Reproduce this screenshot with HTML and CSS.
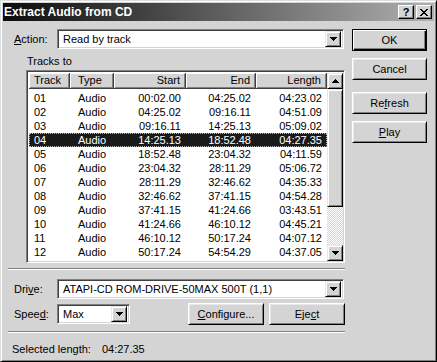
FILE: index.html
```html
<!DOCTYPE html>
<html lang="en">

<head>
    <meta charset="UTF-8">
    <title>Extract Audio from CD</title>
    <link rel="stylesheet" href="styles.css">
</head>

<body>
    <div class="window">
        <div class="titlebar">
            <span class="title">Extract Audio from CD</span>
            <div class="caption-buttons">
                <span class="cap-btn cap-help">?</span>
                <span class="cap-btn">
                    <svg width="8" height="7" viewBox="0 0 8 7"><path d="M0 0h2l2 2.2L6 0h2L5 3.5 8 7H6L4 4.8 2 7H0l3-3.5z" fill="#000" shape-rendering="crispEdges"/></svg>
                </span>
            </div>
        </div>

        <div class="content">
            <div class="main">
                <div class="field-row">
                    <span class="field-label"><u>A</u>ction:</span>
                    <div class="combo combo-wide">
                        <span class="combo-text">Read by track</span>
                        <span class="combo-arrow"><svg width="7" height="4" viewBox="0 0 7 4"><path d="M0 0h7v1h-1v1h-1v1h-1v1h-1v-1h-1v-1h-1v-1h-1z" fill="#000"/></svg></span>
                    </div>
                </div>

                <div class="list-label">Tracks to</div>

                <div class="listview">
                    <div class="list-body">
                        <div class="list-head">
                            <span class="col-track">Track</span>
                            <span class="col-type">Type</span>
                            <span class="col-num">Start</span>
                            <span class="col-num">End</span>
                            <span class="col-num">Length</span>
                        </div>
                        <div class="list-rows">
                            <div class="row"><span class="col-track">01</span><span class="col-type">Audio</span><span class="col-num">00:02.00</span><span class="col-num">04:25.02</span><span class="col-num">04:23.02</span></div>
                            <div class="row"><span class="col-track">02</span><span class="col-type">Audio</span><span class="col-num">04:25.02</span><span class="col-num">09:16.11</span><span class="col-num">04:51.09</span></div>
                            <div class="row"><span class="col-track">03</span><span class="col-type">Audio</span><span class="col-num">09:16.11</span><span class="col-num">14:25.13</span><span class="col-num">05:09.02</span></div>
                            <div class="row selected"><span class="col-track">04</span><span class="col-type">Audio</span><span class="col-num">14:25.13</span><span class="col-num">18:52.48</span><span class="col-num">04:27.35</span></div>
                            <div class="row"><span class="col-track">05</span><span class="col-type">Audio</span><span class="col-num">18:52.48</span><span class="col-num">23:04.32</span><span class="col-num">04:11.59</span></div>
                            <div class="row"><span class="col-track">06</span><span class="col-type">Audio</span><span class="col-num">23:04.32</span><span class="col-num">28:11.29</span><span class="col-num">05:06.72</span></div>
                            <div class="row"><span class="col-track">07</span><span class="col-type">Audio</span><span class="col-num">28:11.29</span><span class="col-num">32:46.62</span><span class="col-num">04:35.33</span></div>
                            <div class="row"><span class="col-track">08</span><span class="col-type">Audio</span><span class="col-num">32:46.62</span><span class="col-num">37:41.15</span><span class="col-num">04:54.28</span></div>
                            <div class="row"><span class="col-track">09</span><span class="col-type">Audio</span><span class="col-num">37:41.15</span><span class="col-num">41:24.66</span><span class="col-num">03:43.51</span></div>
                            <div class="row"><span class="col-track">10</span><span class="col-type">Audio</span><span class="col-num">41:24.66</span><span class="col-num">46:10.12</span><span class="col-num">04:45.21</span></div>
                            <div class="row"><span class="col-track">11</span><span class="col-type">Audio</span><span class="col-num">46:10.12</span><span class="col-num">50:17.24</span><span class="col-num">04:07.12</span></div>
                            <div class="row"><span class="col-track">12</span><span class="col-type">Audio</span><span class="col-num">50:17.24</span><span class="col-num">54:54.29</span><span class="col-num">04:37.05</span></div>
                            <div class="row"><span class="col-track">13</span><span class="col-type">Audio</span><span class="col-num">54:54.29</span><span class="col-num">59:51.38</span><span class="col-num">05:00.09</span></div>
                        </div>
                    </div>
                    <div class="scrollbar">
                        <span class="scroll-btn"><svg width="7" height="4" viewBox="0 0 7 4"><path d="M3 0h1v1h1v1h1v1h1v1h-7v-1h1v-1h1v-1h1z" fill="#000"/></svg></span>
                        <span class="scroll-thumb"></span>
                        <span class="scroll-track"></span>
                        <span class="scroll-btn"><svg width="7" height="4" viewBox="0 0 7 4"><path d="M0 0h7v1h-1v1h-1v1h-1v1h-1v-1h-1v-1h-1v-1h-1z" fill="#000"/></svg></span>
                    </div>
                </div>

                <div class="separator"></div>

                <div class="field-row drive-row">
                    <span class="field-label">Dri<u>v</u>e:</span>
                    <div class="combo combo-wide">
                        <span class="combo-text">ATAPI-CD ROM-DRIVE-50MAX 500T (1,1)</span>
                        <span class="combo-arrow"><svg width="7" height="4" viewBox="0 0 7 4"><path d="M0 0h7v1h-1v1h-1v1h-1v1h-1v-1h-1v-1h-1v-1h-1z" fill="#000"/></svg></span>
                    </div>
                </div>

                <div class="field-row speed-row">
                    <span class="field-label">Spee<u>d</u>:</span>
                    <div class="combo combo-speed">
                        <span class="combo-text">Max</span>
                        <span class="combo-arrow"><svg width="7" height="4" viewBox="0 0 7 4"><path d="M0 0h7v1h-1v1h-1v1h-1v1h-1v-1h-1v-1h-1v-1h-1z" fill="#000"/></svg></span>
                    </div>
                    <span class="btn btn-small btn-configure"><u>C</u>onfigure...</span>
                    <span class="btn btn-small">Eje<u>c</u>t</span>
                </div>

                <div class="separator separator-low"></div>

                <div class="status">Selected length:<span class="status-value">04:27.35</span></div>
            </div>

            <div class="side">
                <span class="btn btn-default">OK</span>
                <span class="btn btn-cancel">Cancel</span>
                <span class="btn btn-refresh">Re<u>f</u>resh</span>
                <span class="btn btn-play"><u>P</u>lay</span>
            </div>
        </div>
    </div>
</body>

</html>
```

FILE: styles.css
```css
* {
    box-sizing: border-box;
}

body {
    margin: 0;
    background: #d4d4d4;
    font-family: "Liberation Sans", Arial, sans-serif;
    font-size: 11px;
    color: #000;
}

u {
    text-decoration-thickness: 1px;
    text-underline-offset: 1px;
}

.window {
    width: 437px;
    height: 362px;
    background: #d4d4d4;
    border: 1px solid;
    border-color: #dcdcdc #000 #000 #dcdcdc;
    box-shadow: inset 1px 1px #fff, inset -1px -1px #808080;
    padding: 2px;
    display: flex;
    flex-direction: column;
}

/* title bar */
.titlebar {
    height: 18px;
    flex-shrink: 0;
    display: flex;
    align-items: center;
    justify-content: space-between;
    padding: 0 2px 0 1px;
    background: linear-gradient(to right, #0c0c0c, #b0b0b0);
}

.title {
    color: #fff;
    font-weight: bold;
    font-size: 12px;
}

.caption-buttons {
    display: flex;
    gap: 2px;
}

.cap-btn {
    width: 16px;
    height: 14px;
    display: flex;
    align-items: center;
    justify-content: center;
    background: #d4d4d4;
    border: 1px solid;
    border-color: #fff #000 #000 #fff;
    box-shadow: inset -1px -1px #808080;
}

.cap-help {
    font-weight: bold;
    font-size: 11px;
    line-height: 1;
}

/* layout */
.content {
    flex: 1;
    display: flex;
    gap: 7px;
    padding: 8px 7px 0 8px;
}

.main {
    width: 334px;
    display: flex;
    flex-direction: column;
}

.side {
    width: 75px;
    display: flex;
    flex-direction: column;
}

.field-row {
    display: flex;
    align-items: center;
    height: 20px;
}

.field-label {
    width: 46px;
    padding-left: 3px;
}

/* combo boxes */
.combo {
    height: 20px;
    display: flex;
    align-items: center;
    background: #fff;
    border: 1px solid;
    border-color: #808080 #fff #fff #808080;
    box-shadow: inset 1px 1px #404040, inset -1px -1px #d4d4d4;
    padding: 2px;
}

.combo-wide {
    flex: 1;
    margin-right: 1px;
}

.combo-speed {
    width: 73px;
}

.combo-text {
    flex: 1;
    padding-left: 3px;
    white-space: nowrap;
    overflow: hidden;
}

.combo-arrow {
    width: 16px;
    height: 16px;
    display: flex;
    align-items: center;
    justify-content: center;
    background: #d4d4d4;
    border: 1px solid;
    border-color: #e8e8e8 #000 #000 #e8e8e8;
    box-shadow: inset 1px 1px #fff, inset -1px -1px #808080;
}

/* track list */
.list-label {
    margin-top: 6px;
    line-height: 13px;
    padding-left: 16px;
}

.listview {
    margin-top: 2px;
    margin-left: 15px;
    height: 193px;
    display: flex;
    background: #fff;
    border: 1px solid;
    border-color: #808080 #fff #fff #808080;
    box-shadow: inset 1px 1px #404040, inset -1px -1px #d4d4d4;
    padding: 2px 1px 1px 2px;
}

.list-body {
    flex: 1;
    overflow: hidden;
}

.list-head,
.row {
    display: grid;
    grid-template-columns: 41px 44px 72px 70px 71px;
}

.list-head {
    height: 16px;
}

.list-head span {
    background: #d4d4d4;
    border-right: 1px solid #404040;
    border-bottom: 1px solid #404040;
    box-shadow: inset 1px 1px #fff, inset -1px -1px #808080;
    line-height: 15px;
}

.list-rows {
    padding-top: 2px;
}

.row {
    line-height: 14px;
    height: 14px;
    white-space: nowrap;
}

.col-track {
    padding-left: 5px;
}

.col-type {
    padding-left: 8px;
}

.col-num {
    text-align: right;
    padding-right: 5px;
}

.row.selected {
    background: #1a1a1a;
    color: #fff;
    outline: 1px dotted #bbb;
    outline-offset: -1px;
}

.scrollbar {
    width: 16px;
    display: flex;
    flex-direction: column;
}

.scroll-btn,
.scroll-thumb {
    background: #d4d4d4;
    border: 1px solid;
    border-color: #e8e8e8 #000 #000 #e8e8e8;
    box-shadow: inset 1px 1px #fff, inset -1px -1px #808080;
}

.scroll-btn {
    height: 16px;
    display: flex;
    align-items: center;
    justify-content: center;
}

.scroll-thumb {
    height: 118px;
}

.scroll-track {
    flex: 1;
    background: repeating-conic-gradient(#d4d4d4 0 25%, #fff 0 50%) 0 0 / 2px 2px;
}

/* separators */
.separator {
    margin-top: 5px;
    margin-left: -3px;
    height: 2px;
    border-top: 1px solid #808080;
    border-bottom: 1px solid #fff;
}

.separator-low {
    margin-top: 6px;
}

.drive-row {
    margin-top: 9px;
}

.speed-row {
    margin-top: 4px;
    height: 22px;
}

/* buttons */
.btn {
    height: 22px;
    display: flex;
    align-items: center;
    justify-content: center;
    background: #d4d4d4;
    border: 1px solid;
    border-color: #fff #000 #000 #fff;
    box-shadow: inset 1px 1px #e8e8e8, inset -1px -1px #808080;
}

.btn-small {
    width: 76px;
}

.btn-configure {
    margin-left: auto;
    margin-right: 5px;
}

.btn-default {
    border-color: #000;
    box-shadow: inset 1px 1px #fff, inset -1px -1px #000, inset -2px -2px #808080;
}

.btn-cancel {
    margin-top: 7px;
}

.btn-refresh {
    margin-top: 12px;
}

.btn-play {
    margin-top: 7px;
}

.status {
    margin-top: 10px;
    line-height: 13px;
    padding-left: 1px;
}

.status-value {
    margin-left: 11px;
}
```
